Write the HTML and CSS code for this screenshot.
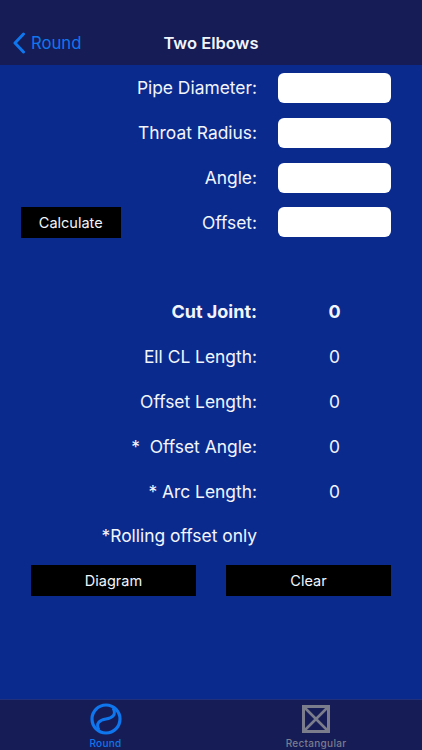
FILE: index.html
```html
<!DOCTYPE html>
<html lang="en">
<head>
    <meta charset="UTF-8">
    <meta name="viewport" content="width=device-width, initial-scale=1.0">
    <title>Two Elbows</title>
    <link rel="stylesheet" href="styles.css">
</head>
<body>
  <div class="screen">
    <header class="nav-bar">
      <a class="back-link">
        <svg class="back-icon" width="14" height="22" viewBox="0 0 14 22">
          <path d="M11.5 2 L3 11 L11.5 20" fill="none" stroke="#0f76ee" stroke-width="3" stroke-linecap="round" stroke-linejoin="round"/>
        </svg>
        <span>Round</span>
      </a>
      <h1 class="nav-title">Two Elbows</h1>
    </header>

    <main class="form-area">
      <div class="row">
        <label class="label">Pipe Diameter:</label>
        <input class="field" type="text">
      </div>
      <div class="row">
        <label class="label">Throat Radius:</label>
        <input class="field" type="text">
      </div>
      <div class="row">
        <label class="label">Angle:</label>
        <input class="field" type="text">
      </div>
      <div class="row">
        <button class="black-btn calc-btn">Calculate</button>
        <label class="label">Offset:</label>
        <input class="field" type="text">
      </div>
      <div class="row"></div>
      <div class="row bold">
        <span class="label">Cut Joint:</span>
        <span class="value">0</span>
      </div>
      <div class="row">
        <span class="label">Ell CL Length:</span>
        <span class="value">0</span>
      </div>
      <div class="row">
        <span class="label">Offset Length:</span>
        <span class="value">0</span>
      </div>
      <div class="row">
        <span class="label">*&nbsp; Offset Angle:</span>
        <span class="value">0</span>
      </div>
      <div class="row">
        <span class="label">* Arc Length:</span>
        <span class="value">0</span>
      </div>
      <div class="row">
        <span class="label">*Rolling offset only</span>
      </div>
      <div class="button-row">
        <button class="black-btn">Diagram</button>
        <button class="black-btn">Clear</button>
      </div>
    </main>

    <nav class="tab-bar">
      <a class="tab active">
        <svg width="32" height="32" viewBox="0 0 32 32">
          <circle cx="16" cy="16" r="14" fill="none" stroke="#0f76ee" stroke-width="3.2"/>
          <path d="M9 27 C5 20 10 17 16 16 C22 15 27 12 23 5" fill="none" stroke="#0f76ee" stroke-width="3"/>
        </svg>
        <span>Round</span>
      </a>
      <a class="tab">
        <svg width="28" height="28" viewBox="0 0 28 28">
          <rect x="1.5" y="1.5" width="25" height="25" fill="none" stroke="#7b7d8c" stroke-width="3"/>
          <path d="M2 2 L26 26 M26 2 L2 26" fill="none" stroke="#7b7d8c" stroke-width="2.6"/>
        </svg>
        <span>Rectangular</span>
      </a>
    </nav>
  </div>
</body>
</html>
```

FILE: styles.css
```css
* {
  box-sizing: border-box;
}

body {
  margin: 0;
  font-family: Inter, "Liberation Sans", sans-serif;
  color: #f2f5fb;
}

.screen {
  width: 422px;
  height: 750px;
  display: flex;
  flex-direction: column;
  background: #0a2a8e;
  overflow: hidden;
}

.nav-bar {
  position: relative;
  height: 65px;
  flex: none;
  background: #161c56;
  display: flex;
  align-items: center;
  justify-content: center;
  padding-top: 21px;
}

.nav-title {
  margin: 0;
  font-size: 16.5px;
  font-weight: 600;
}

.back-link {
  position: absolute;
  left: 12px;
  top: 32px;
  display: flex;
  align-items: center;
  gap: 5px;
  color: #0f76ee;
  font-size: 16.7px;
}

.form-area {
  flex: 1;
  padding: 0.6px 31px 0 21px;
  display: grid;
  grid-auto-rows: 44.8px;
  align-content: start;
}

.row {
  display: grid;
  grid-template-columns: 99.5px 1fr 113px;
  column-gap: 21px;
  align-items: center;
  font-size: 17.4px;
}

.bold {
  font-weight: 700;
  font-size: 18px;
}

.label {
  grid-column: 1 / 3;
  text-align: right;
}

.calc-btn + .label {
  grid-column: 2;
}

.value {
  grid-column: 3;
  text-align: center;
}

.field {
  grid-column: 3;
  height: 30px;
  border: none;
  border-radius: 6px;
  background: #fff;
}

.black-btn {
  height: 31px;
  border: none;
  background: #000;
  color: #f2f5fb;
  font-family: inherit;
  font-size: 14.5px;
  padding: 0;
}

.button-row {
  display: grid;
  grid-template-columns: 165px 165px;
  column-gap: 30px;
  align-items: center;
  padding-left: 10px;
}

.tab-bar {
  height: 51px;
  flex: none;
  background: #161c56;
  border-top: 1px solid #22307c;
  display: grid;
  grid-template-columns: 211px 210px;
}

.tab {
  display: flex;
  flex-direction: column;
  align-items: center;
  padding-top: 3px;
  color: #7b7d8c;
  font-size: 10px;
  font-weight: 500;
  letter-spacing: 0.3px;
}

.tab svg {
  height: 32px;
}

.tab span {
  margin-top: 2px;
}

.tab.active {
  color: #0f76ee;
}
```
